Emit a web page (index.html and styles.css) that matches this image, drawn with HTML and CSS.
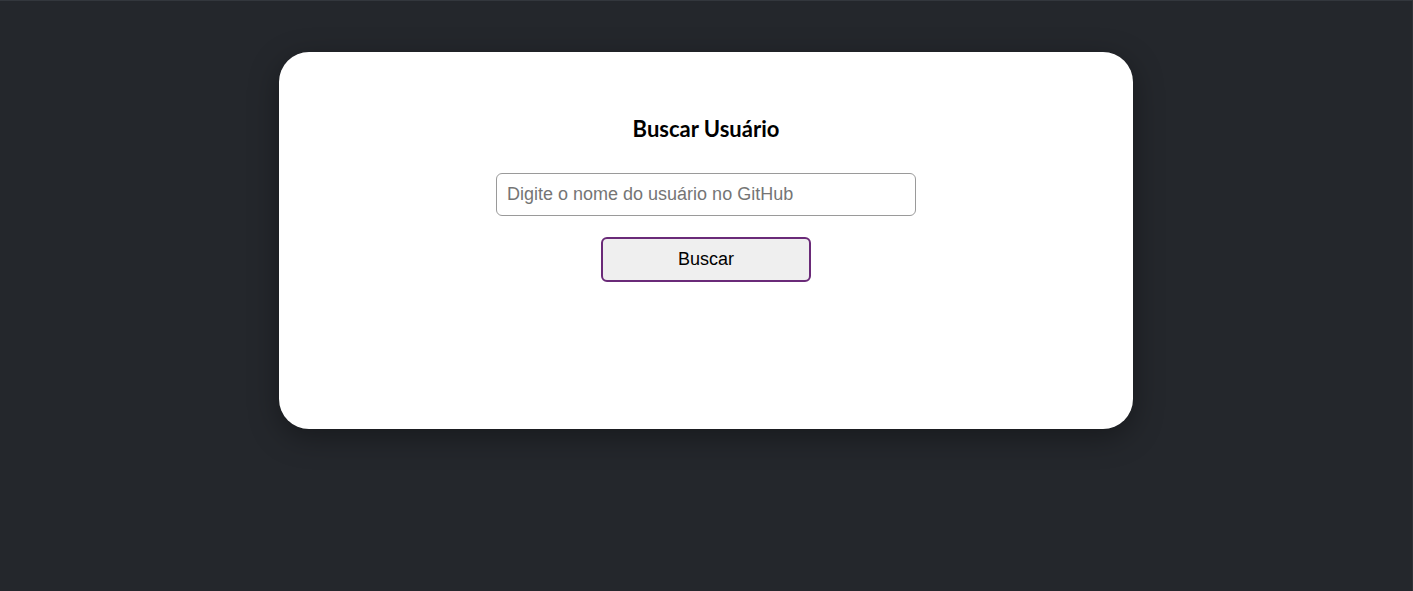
FILE: index.html
```html
<!DOCTYPE html>
<html lang="pt-BR">
<head>
<meta charset="utf-8">
<title>Buscar Usuário</title>
<link rel="stylesheet" href="styles.css">
</head>
<body>
<main class="page">
  <section class="card">
    <h1 class="title">Buscar Usuário</h1>
    <input class="search-input" type="text" placeholder="Digite o nome do usuário no GitHub">
    <button class="search-btn" type="button">Buscar</button>
  </section>
</main>
</body>
</html>
```
FILE: styles.css
```css
html, body {
  margin: 0;
  padding: 0;
  height: 100%;
}
body {
  background: #24272c;
  font-family: "Liberation Sans", Arial, sans-serif;
  box-sizing: border-box;
  border-top: 1px solid #33373d;
  border-right: 1px solid #2e3237;
}
.page {
  display: flex;
  justify-content: center;
  padding-top: 51px;
}
.card {
  width: 854px;
  height: 377px;
  box-sizing: border-box;
  background: #ffffff;
  border-radius: 30px;
  box-shadow: 0 8px 30px rgba(0, 0, 0, 0.35);
  display: flex;
  flex-direction: column;
  align-items: center;
  padding-top: 63px;
}
.title {
  margin: 0;
  font-family: Lato, "Open Sans", sans-serif;
  font-weight: 700;
  font-size: 22px;
  line-height: 28px;
  color: #000;
}
.search-input {
  margin-top: 30px;
  width: 420px;
  height: 43px;
  box-sizing: border-box;
  border: 1px solid #9a9a9a;
  border-radius: 6px;
  padding: 0 10px;
  font-family: "Liberation Sans", Arial, sans-serif;
  font-size: 18px;
  color: #222;
  outline: none;
}
.search-input::placeholder {
  color: #757575;
}
.search-btn {
  margin-top: 21px;
  width: 210px;
  height: 45px;
  box-sizing: border-box;
  border: 2px solid #6a2a78;
  border-radius: 6px;
  background: #efefef;
  font-family: "Liberation Sans", Arial, sans-serif;
  font-size: 18px;
  color: #000;
  cursor: pointer;
}
```
